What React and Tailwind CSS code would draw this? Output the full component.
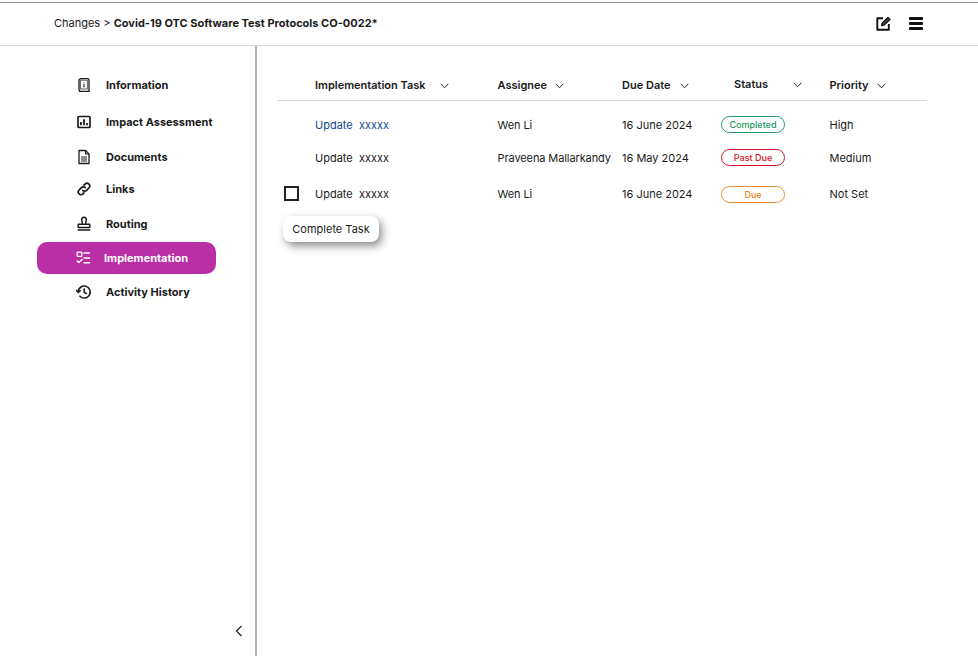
import React from "react";

const Chevron = ({ className = "" }) => (
  <svg width="9" height="6" viewBox="0 0 9 6" fill="none" className={className}>
    <path d="M0.7 0.8 L4.5 4.8 L8.3 0.8" stroke="#222" strokeWidth="1" />
  </svg>
);

const I = ({ children, size = 16 }) => (
  <svg width={size} height={size} viewBox="0 0 16 16" fill="none" stroke="#1a1a1a" strokeWidth="1.5" strokeLinecap="round" strokeLinejoin="round">
    {children}
  </svg>
);

const icons = {
  info: (
    <I>
      <path d="M5 1.6h6.7a1.3 1.3 0 0 1 1.3 1.3v11.5H5a2 2 0 0 1-2-2V3.6a2 2 0 0 1 2-2z" strokeWidth="1.3" />
      <path d="M4.8 3.2h6.6v8.8H4.8z" strokeWidth="0.7" />
      <path d="M8 5v.4M8 6.8v3.6" strokeWidth="1.1" strokeLinecap="butt" />
    </I>
  ),
  chart: (
    <I>
      <rect x="2" y="2.5" width="12" height="11" rx="1" strokeWidth="1.7" />
      <path d="M5 11.2V8M8 11.2V5.2M11 11.2V9" strokeWidth="1.8" strokeLinecap="butt" />
    </I>
  ),
  doc: (
    <I>
      <path d="M3 1.5h6.5L13 5v9.5H3z" strokeWidth="1.3" />
      <path d="M9.5 1.5V5H13M5.5 8h5M5.5 10h5M5.5 12h5" strokeWidth="1.1" />
    </I>
  ),
  link: (
    <I>
      <path d="M6.7 9.3a2.7 2.7 0 0 0 3.9 0l2.3-2.3a2.7 2.7 0 0 0-3.9-3.9l-1 1" strokeWidth="1.7" />
      <path d="M9.3 6.7a2.7 2.7 0 0 0-3.9 0L3.1 9a2.7 2.7 0 0 0 3.9 3.9l1-1" strokeWidth="1.7" />
    </I>
  ),
  stamp: (
    <I>
      <path d="M6.2 7.6c.5-1.3 0-2.3-.5-3.2A2.4 2.4 0 1 1 10.3 4.4c-.5.9-1 1.9-.5 3.2" />
      <path d="M2.3 8.2h11.4v3.2H2.3zM2.3 14h11.4" />
    </I>
  ),
  list: (
    <I>
      <rect x="2.2" y="2.2" width="4.6" height="4.2" rx="0.5" stroke="#fff" strokeWidth="1.3" />
      <path d="M2.2 11l1.6 1.6L7 9.6M9 3h5.5M9 8h5.5M9 12.7h5.5" stroke="#fff" strokeWidth="1.4" />
    </I>
  ),
  history: (
    <I>
      <path d="M2.2 8a6 6 0 1 1 1.7 4.2" strokeWidth="1.6" />
      <path d="M0.6 6.4 2.2 8.3 4.2 6.6" strokeWidth="1.6" />
      <path d="M8.2 5v3.3l2.2 1.3" strokeWidth="1.6" />
    </I>
  ),
};

const nav = [
  { label: "Information", icon: "info", mt: "mt-0" },
  { label: "Impact Assessment", icon: "chart", mt: "mt-[5px]" },
  { label: "Documents", icon: "doc", mt: "mt-[3px]" },
  { label: "Links", icon: "link", mt: "mt-0" },
  { label: "Routing", icon: "stamp", mt: "mt-[3px]" },
  { label: "Implementation", icon: "list", active: true, mt: "mt-[2px]" },
  { label: "Activity History", icon: "history", mt: "mt-[2px]" },
];

const rows = [
  { task: "Update  xxxxx", link: true, who: "Wen Li", date: "16 June 2024", status: "Completed", cls: "border-[#1f9d63] text-[#1a9a5e] -mt-[2px]", pr: "High", h: "h-[33px]" },
  { task: "Update  xxxxx", who: "Praveena Mallarkandy", date: "16 May 2024", status: "Past Due", cls: "border-[#d3122a] text-[#d3122a] -mt-[2px]", pr: "Medium", h: "h-[33px]" },
  { task: "Update  xxxxx", check: true, who: "Wen Li", date: "16 June 2024", status: "Due", cls: "border-[#ee8f35] text-[#e98524] mt-0", pr: "Not Set", h: "h-[39px]" },
];

const grid = "grid grid-cols-[38px_182.5px_124.5px_99px_108.5px_97.5px] items-center";

export default function App() {
  return (
    <div className="w-[978px] h-[656px] bg-white overflow-hidden text-[#1a1a1a] font-['Inter','Liberation_Sans',sans-serif] flex flex-col">
      <header className="mt-[2px] h-[44px] shrink-0 border-t border-t-[#8c8c8c] border-b border-b-[#d9d9d9] flex items-center pl-[54px] pr-[55px]">
        <div className="text-[11px] -mt-[2px] whitespace-pre">
          Changes &gt; <span className="font-bold">Covid-19 OTC Software Test Protocols CO-0022*</span>
        </div>
        <div className="ml-auto flex items-center gap-[18px] -mt-[2px]">
          <svg width="15" height="15" viewBox="0 0 15 15" fill="none" stroke="#111" strokeWidth="1.9">
            <path d="M7 2.2H1.3v11.5h11.5V8" strokeLinejoin="round" />
            <path d="M5.6 9.5l.5-2.4 5.8-5.6 2 2-5.8 5.6z" fill="#444" strokeWidth="1.3" strokeLinejoin="round" />
          </svg>
          <div className="w-[14px] flex flex-col gap-[2px]">
            <div className="h-[3px] bg-[#111] rounded-[1px]" />
            <div className="h-[3px] bg-[#111] rounded-[1px]" />
            <div className="h-[3px] bg-[#111] rounded-[1px]" />
          </div>
        </div>
      </header>

      <div className="flex flex-1 min-h-0">
        <aside className="w-[257px] shrink-0 border-r-2 border-r-[#b5b5b5] flex flex-col pt-[23px]">
          <nav className="flex flex-col pl-[37px] pr-[39px]">
            {nav.map((n) => (
              <div
                key={n.label}
                className={`${n.mt} h-[32px] flex items-center text-[11px] font-bold rounded-[10px] ${
                  n.active ? "bg-[#bb2fa6] text-white pl-[38px] gap-[13px]" : "pl-[39px] gap-[14px]"
                }`}
              >
                {icons[n.icon]}
                <span>{n.label}</span>
              </div>
            ))}
          </nav>
          <div className="mt-auto mb-[19px] ml-[235px] h-[12px] flex items-center">
            <svg width="8" height="12" viewBox="0 0 8 12" fill="none" stroke="#222" strokeWidth="1.2">
              <path d="M6.5 1 L1.5 6 L6.5 11" />
            </svg>
          </div>
        </aside>

        <main className="flex-1 pl-[20px] pt-[23px] pr-[51px]">
          <div className={`${grid} h-[32px] pt-[2px] border-b border-b-[#d9d9d9] text-[11px] font-semibold`}>
            <div />
            <div className="flex items-center gap-[14px]">
              <span>Implementation Task</span>
              <Chevron />
            </div>
            <div className="flex items-center gap-[8px]">
              <span>Assignee</span>
              <Chevron />
            </div>
            <div className="flex items-center gap-[9px]">
              <span>Due Date</span>
              <Chevron />
            </div>
            <div className="flex items-center gap-[25px] pl-[13px] -mt-[2px]">
              <span>Status</span>
              <Chevron />
            </div>
            <div className="flex items-center gap-[8px]">
              <span>Priority</span>
              <Chevron />
            </div>
          </div>

          <div className="pt-[8px] relative text-[11px]">
            {rows.map((r, i) => (
              <div key={i} className={`${grid} ${r.h}`}>
                <div className="pl-[7px]">
                  {r.check && <div className="w-[15px] h-[15px] border-2 border-[#222] -mt-[2px]" />}
                </div>
                <div className={`whitespace-pre ${r.link ? "text-[#0f4c8f]" : ""}`}>{r.task}</div>
                <div className="whitespace-nowrap tracking-[-0.1px]">{r.who}</div>
                <div>{r.date}</div>
                <div>
                  <div className={`w-[64px] h-[17px] rounded-full border flex items-center justify-center text-[9px] font-medium ${r.cls}`}>
                    {r.status}
                  </div>
                </div>
                <div>{r.pr}</div>
              </div>
            ))}
            <div className="absolute left-[6px] top-[115px] w-[96px] h-[26px] rounded-[8px] bg-white flex items-center justify-center shadow-[3px_4px_8px_rgba(0,0,0,0.45)]">
              Complete Task
            </div>
          </div>
        </main>
      </div>
    </div>
  );
}
